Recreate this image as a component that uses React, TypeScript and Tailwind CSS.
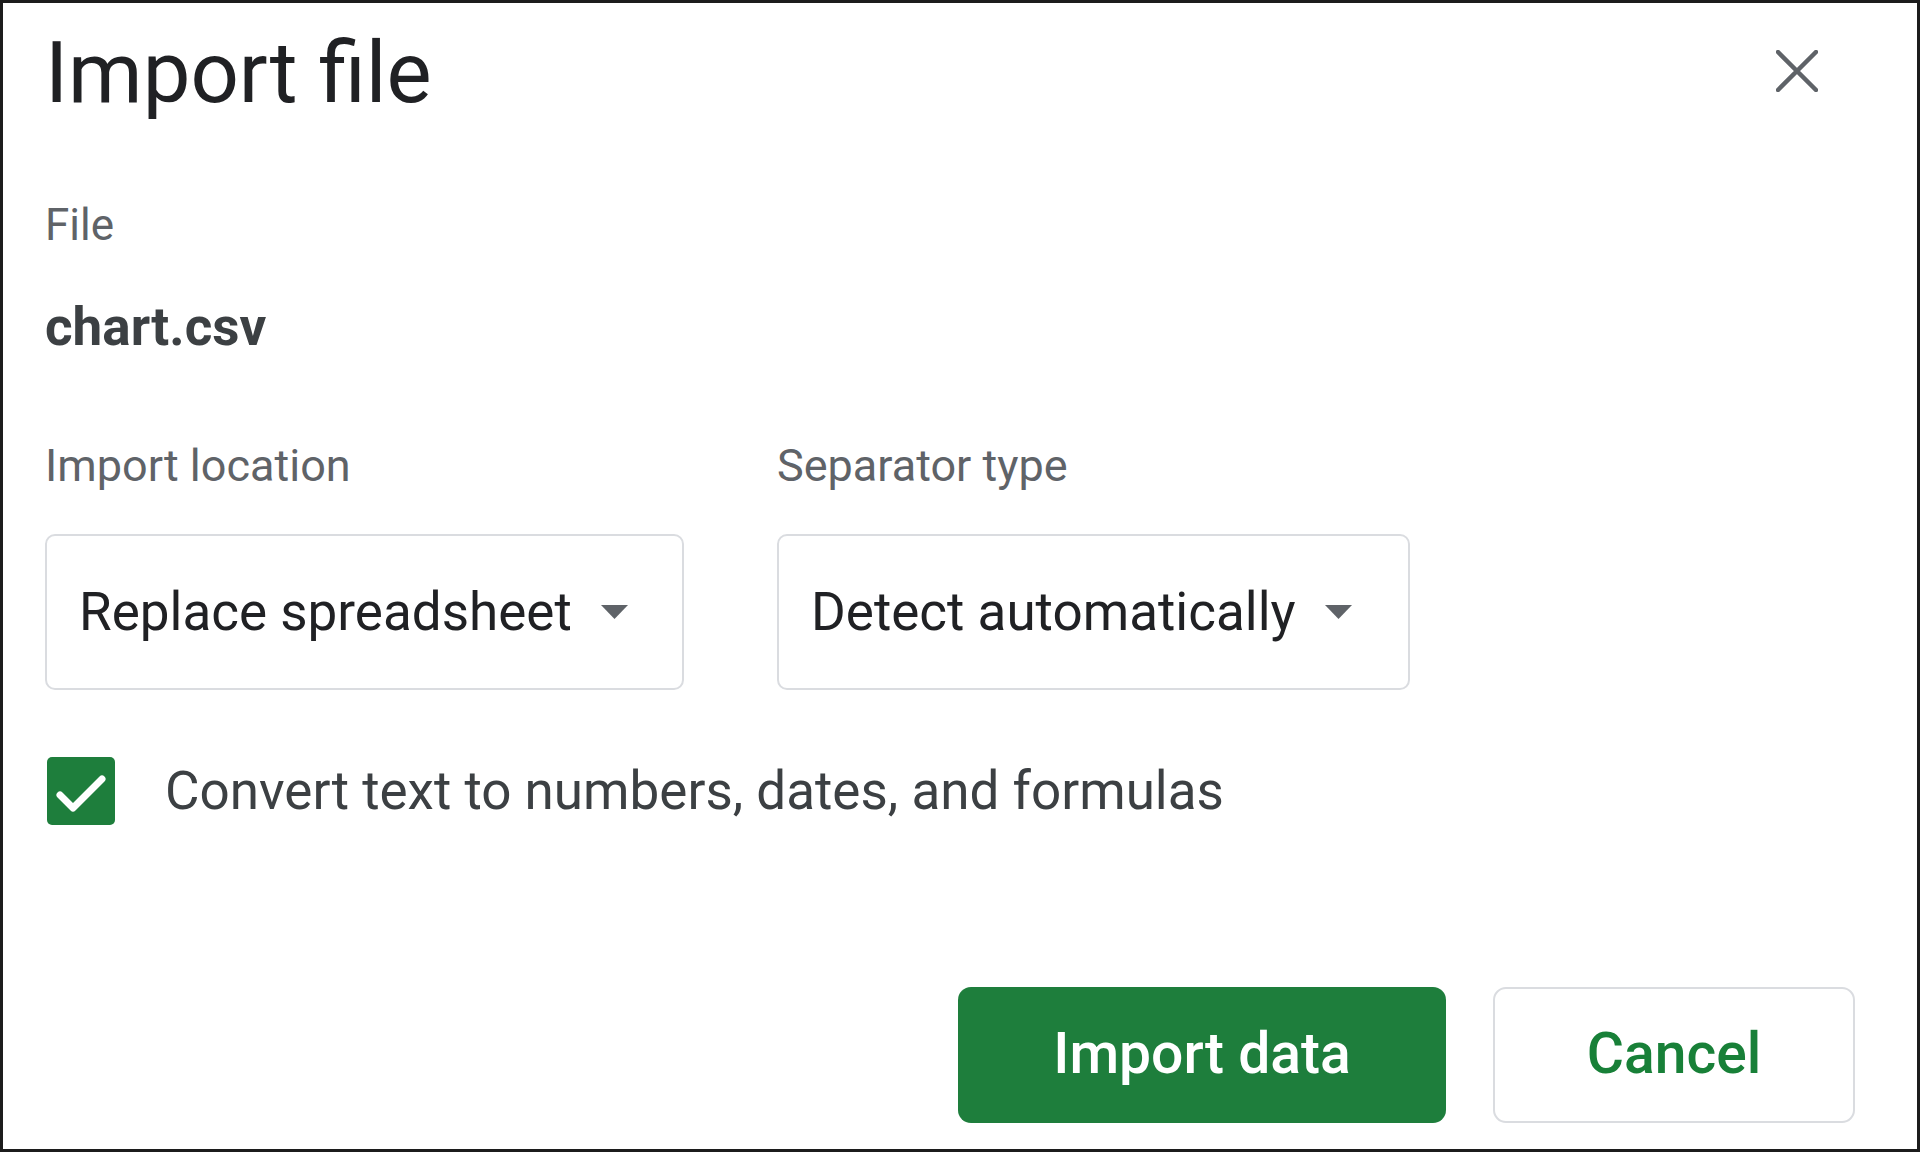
import React from 'react';

const font = "font-['Roboto','Liberation_Sans',sans-serif]";

function Caret() {
  return (
    <svg width="27" height="14" viewBox="0 0 27 14" className="shrink-0">
      <path d="M0 0 L27 0 L13.5 14 Z" fill="#5f6368" />
    </svg>
  );
}

function Select({ label, value, width }: { label: string; value: string; width: string }) {
  return (
    <div className="flex flex-col">
      <div className="text-[45px] leading-none text-[#5f6368]">{label}</div>
      <div className={`${width} mt-[46px] h-[156px] flex items-center pl-[32px] border-2 border-[#dadce0] rounded-[10px]`}>
        <span className="text-[53px] leading-none text-[#202124] whitespace-nowrap">{value}</span>
        <span className="ml-[29px]"><Caret /></span>
      </div>
    </div>
  );
}

export default function App() {
  return (
    <div className={`${font} w-[1920px] h-[1152px] bg-white border-[3px] border-[#1c1c1c] flex flex-col pl-[42px] pr-[62px] overflow-hidden`}>
      {/* header */}
      <div className="flex items-start justify-between mt-[28px]">
        <h1 className="text-[85px] leading-none text-[#202124]">Import file</h1>
        <button className="mt-[19px] mr-[37px] w-[42px] h-[42px] flex items-center justify-center">
          <svg width="42" height="42" viewBox="0 0 42 42">
            <path d="M2 2 L40 40 M40 2 L2 40" stroke="#5f6368" strokeWidth="4.5" strokeLinecap="round" />
          </svg>
        </button>
      </div>

      <div className="mt-[87px] text-[44px] leading-none text-[#5f6368]">File</div>
      <div className="mt-[54px] text-[53px] leading-none font-bold text-[#3c4043]">chart.csv</div>

      <div className="mt-[89px] flex gap-[93px]">
        <Select label="Import location" value="Replace spreadsheet" width="w-[639px]" />
        <Select label="Separator type" value="Detect automatically" width="w-[633px]" />
      </div>

      <div className="mt-[67px] flex items-center gap-[50px] pl-[2px]">
        <div className="w-[68px] h-[68px] rounded-[5px] bg-[#1e7e3c] flex items-center justify-center">
          <svg width="68" height="68" viewBox="0 0 68 68">
            <polyline points="13,38 26,51 55,22" fill="none" stroke="#fff" strokeWidth="7" strokeLinecap="round" strokeLinejoin="round" />
          </svg>
        </div>
        <span className="text-[53px] leading-none text-[#3c4043]">Convert text to numbers, dates, and formulas</span>
      </div>

      <div className="mt-[162px] flex justify-end gap-[47px]">
        <button className="w-[488px] h-[136px] rounded-[13px] bg-[#1e7e3c] text-white text-[57px] font-medium leading-none pb-[3px]">
          Import data
        </button>
        <button className="w-[362px] h-[136px] rounded-[13px] border-2 border-[#dadce0] bg-white text-[#188038] text-[57px] font-medium leading-none pb-[3px]">
          Cancel
        </button>
      </div>
    </div>
  );
}
